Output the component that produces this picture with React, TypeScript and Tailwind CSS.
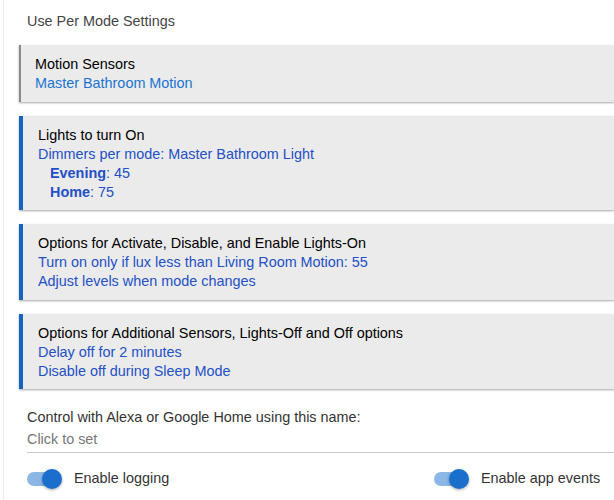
import React from 'react';

type Card = {
  title: string;
  lines: React.ReactNode[];
  accent: 'gray' | 'blue';
};

const cards: Card[] = [
  { title: 'Motion Sensors', accent: 'gray', lines: [<span className="text-[#1a73d0]">Master Bathroom Motion</span>] },
  {
    title: 'Lights to turn On',
    accent: 'blue',
    lines: [
      <span>Dimmers per mode: Master Bathroom Light</span>,
      <span className="pl-3"><b>Evening</b>: 45</span>,
      <span className="pl-3"><b>Home</b>: 75</span>,
    ],
  },
  {
    title: 'Options for Activate, Disable, and Enable Lights-On',
    accent: 'blue',
    lines: [<span>Turn on only if lux less than Living Room Motion: 55</span>, <span>Adjust levels when mode changes</span>],
  },
  {
    title: 'Options for Additional Sensors, Lights-Off and Off options',
    accent: 'blue',
    lines: [<span>Delay off for 2 minutes</span>, <span>Disable off during Sleep Mode</span>],
  },
];

function Toggle({ label }: { label: string }) {
  return (
    <div className="flex items-center">
      <div className="relative w-[34px] h-[14px] rounded-full bg-[#8bb6e6]">
        <div className="absolute -right-[1px] -top-[3px] w-5 h-5 rounded-full bg-[#1a6fcc] shadow-[0_1px_3px_rgba(0,0,0,0.35)]" />
      </div>
      <span className="ml-[13px] text-[#333]">{label}</span>
    </div>
  );
}

export default function App() {
  return (
    <div className="w-[614px] h-[500px] overflow-hidden bg-white text-[14.4px] leading-[19px]" style={{ fontFamily: '"Liberation Sans", Arial, sans-serif' }}>
      <div className="ml-[3px] h-full border-l border-[#ececec] pl-[15px] pt-[12px]">
        <div className="pl-[8px] text-[#444]">Use Per Mode Settings</div>

        <div className="mt-[14px] flex flex-col gap-[14px]">
          {cards.map((c, i) => (
            <div key={i}
              className={`bg-[#ebebeb] shadow-[0_1px_2px_rgba(0,0,0,0.35)] pt-[10px] pb-[8.5px] flex flex-col
                ${c.accent === 'gray' ? 'border-l-2 border-[#8a8a8a] pl-[14px]' : 'border-l-4 border-[#1565c0] pl-[15px]'}`}>
              <div className="text-black">{c.title}</div>
              {c.lines.map((l, j) => (
                <div key={j} className="text-[#2350c6]">{l}</div>
              ))}
            </div>
          ))}
        </div>

        <div className="mt-[19px] pl-[8px]">
          <div className="text-[#333]">Control with Alexa or Google Home using this name:</div>
          <div className="mt-[3px] pb-[3px] text-[#777] border-b border-[#c8c8c8]">Click to set</div>
        </div>

        <div className="mt-[16px] pl-[8px] flex">
          <div className="w-[407px]"><Toggle label="Enable logging" /></div>
          <Toggle label="Enable app events" />
        </div>
      </div>
    </div>
  );
}
